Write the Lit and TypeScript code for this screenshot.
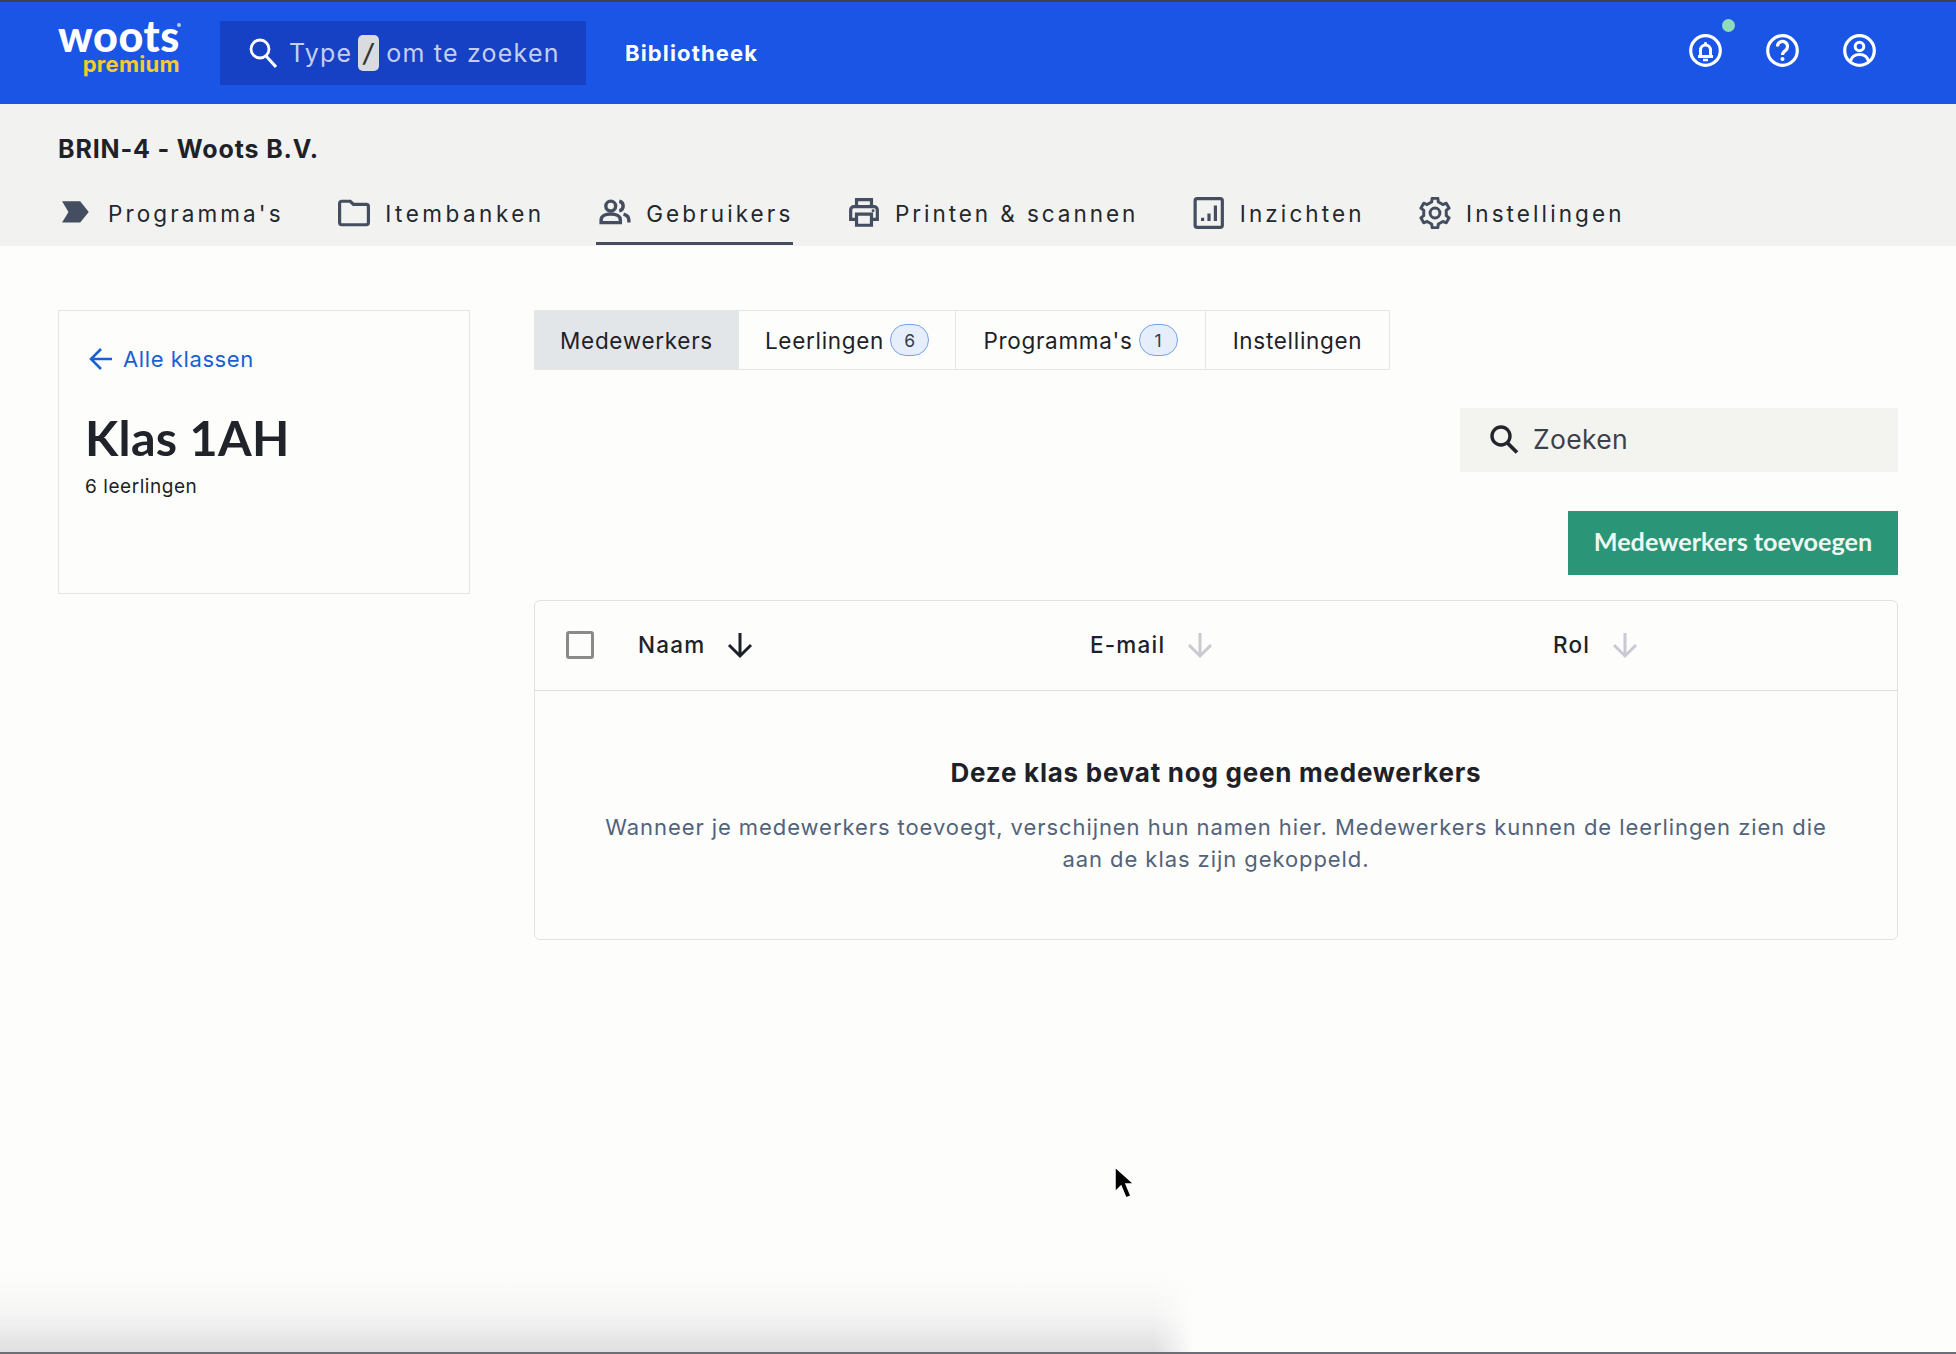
import { LitElement, html, css, svg } from "lit";
import { customElement } from "lit/decorators.js";

const gearPath = () => {
  const pts: string[] = [];
  for (let i = 0; i < 6; i++) {
    const a = -90 + i * 60;
    const p = (deg: number, r: number) => {
      const t = (deg * Math.PI) / 180;
      return `${(15 + r * Math.cos(t)).toFixed(2)} ${(15 + r * Math.sin(t)).toFixed(2)}`;
    };
    pts.push(p(a - 30, 10.6), p(a - 17, 10.8), p(a - 11, 14), p(a + 11, 14), p(a + 17, 10.8));
  }
  return "M" + pts.join("L") + "Z";
};

const ink = "#444e60";
const tabs = [
  { label: "Programma's", icon: svg`<path d="M1 4h17l8 10-8 10H1l6-10z" fill="${ink}"/>` },
  { label: "Itembanken", icon: svg`<path d="M1.500 6a2 2 0 0 1 2-2h8l3 3h12a2 2 0 0 1 2 2v15a2 2 0 0 1-2 2h-23a2 2 0 0 1-2-2z" fill="none" stroke="${ink}" stroke-width="3"/>` },
  { label: "Gebruikers", active: true, icon: svg`<circle cx="11" cy="8.500" r="4.600" fill="none" stroke="${ink}" stroke-width="3.200"/><path d="M2 24v-2.500c0-3.600 4-5.500 9-5.500s9 1.900 9 5.500V24z" fill="none" stroke="${ink}" stroke-width="3.200"/><path d="M19 4a4.600 4.600 0 0 1 0 9M23 16c3 .9 5 2.700 5 5.500V24" fill="none" stroke="${ink}" stroke-width="3.200"/>` },
  { label: "Printen & scannen", icon: svg`<path d="M8 9V2.500h14V9M8 21H2.500V12a3 3 0 0 1 3-3h19a3 3 0 0 1 3 3v9H22" fill="none" stroke="${ink}" stroke-width="3"/><path d="M8 16h14v10.500H8z" fill="none" stroke="${ink}" stroke-width="3"/><circle cx="23.500" cy="13" r="1.400" fill="${ink}"/>` },
  { label: "Inzichten", icon: svg`<rect x="2" y="1.500" width="25.500" height="27" rx="2" fill="none" stroke="${ink}" stroke-width="3"/><path d="M9 22.500v-3M15 22.500v-7M21 22.500V8" fill="none" stroke="${ink}" stroke-width="3"/>` },
  { label: "Instellingen", icon: svg`<path d="${gearPath()}" fill="none" stroke="${ink}" stroke-width="2.800" stroke-linejoin="round"/><circle cx="15" cy="15" r="4.600" fill="none" stroke="${ink}" stroke-width="2.800"/>` },
];

const arrow = (muted = false) => html`<svg class="sort" viewBox="0 0 28 28" aria-hidden="true"><path d="M14 2v23M3 14l11 11 11-11" fill="none" stroke="${muted ? "#c9c9d3" : "#1d2127"}" stroke-width="3"/></svg>`;

@customElement("app-root")
export class AppRoot extends LitElement {
  static styles = css`
    :host { display: block; position: relative; width: 1956px; height: 1354px; overflow: hidden; background: #fdfdfc; font-family: Inter, "Liberation Sans", sans-serif; color: #1e2228; }
    * { box-sizing: border-box; }
    .top { height: 104px; background: #1a55e6; border-top: 2px solid #3d4150; display: flex; align-items: center; padding: 0 58px; }
    .logo { width: 122px; height: 62px; margin-top: -6px; display: flex; flex-direction: column; align-items: flex-end; position: relative; color: #fff; }
    .logo b { font: 900 43px/34px Lato, sans-serif; letter-spacing: .6px; }
    .logo span { font: 700 22px/22px Inter, sans-serif; letter-spacing: .3px; color: #f4ca35; }
    .logo i { position: absolute; right: -1px; top: 4px; width: 4px; height: 4px; border-radius: 50%; background: #b9cbf5; }
    .find { width: 366px; height: 64px; margin: 0 0 0 40px; background: #1741c4; display: flex; align-items: center; padding-left: 29px; color: #c4cff0; font-size: 25px; letter-spacing: 1.200px; }
    .find svg { width: 28px; height: 30px; margin-right: 12px; flex: none; }
    kbd { width: 21px; height: 36px; border-radius: 5px; background: #d9dbde; color: #333; font: italic 500 25px/36px Inter, sans-serif; text-align: center; margin: 0 7px 0 6px; }
    .lib { color: #fff; font-weight: 700; font-size: 22px; margin-left: 39px; letter-spacing: 1.150px; }
    .actions { margin: -5px 22px 0 auto; display: flex; gap: 44px; position: relative; }
    .actions svg { width: 33px; height: 33px; display: block; }
    .dot { position: absolute; left: 33px; top: -15px; width: 13px; height: 13px; border-radius: 50%; background: #8fdcbd; }
    .org { height: 142px; background: #f2f3f1; padding: 0 58px; }
    h2 { margin: 0; padding-top: 30px; font-size: 25px; line-height: 30px; font-weight: 700; letter-spacing: .85px; }
    .nav { display: flex; margin-top: 27px; height: 54px; }
    .nav a { display: flex; align-items: center; gap: 15px; font-size: 22.500px; letter-spacing: 3.100px; color: #23272e; height: 54px; padding: 0 0 7px 3px; margin-right: 51.500px; border-bottom: 3px solid transparent; white-space: nowrap; }
    .nav a:nth-child(2) { letter-spacing: 3.500px; }
    .nav a:nth-child(4) { letter-spacing: 2.950px; }
    .nav a.on { border-bottom-color: #444e60; }
    .nav svg { width: 32px; height: 32px; flex: none; }
    main { display: flex; padding: 64px 58px 0 58px; gap: 64px; }
    .side { width: 412px; height: 284px; flex: none; border: 1px solid #e4e4e2; padding: 33px 26px; }
    .back { display: flex; align-items: center; gap: 10px; color: #1a60d0; font-size: 22px; letter-spacing: .6px; padding-left: 4px; line-height: 30px; }
    .back svg { width: 24px; height: 24px; }
    h1 { margin: 31px 0 0; font: 700 48.500px/64px Lato, sans-serif; letter-spacing: .3px; color: #20242a; }
    .side p { margin: 4px 0 0; font-size: 19px; line-height: 28px; letter-spacing: .55px; }
    .body { width: 1364px; display: flex; flex-direction: column; }
    .tabs { display: flex; height: 60px; width: 856px; border: 1px solid #e6e6e6; font-size: 22.500px; letter-spacing: .7px; }
    .tabs div { display: flex; align-items: center; justify-content: center; gap: 6px; border-left: 1px solid #e6e6e6; }
    .tabs div:first-child { background: #e3e6e8; border-left: 0; }
    .tabs i { font-style: normal; width: 39px; height: 32px; border-radius: 16px; background: #e7eefb; border: 1px solid #77a3ea; display: grid; place-items: center; font-size: 17.500px; letter-spacing: 0; color: #333b49; }
    .search { align-self: flex-end; width: 438px; height: 64px; margin-top: 38px; background: #f3f3f0; display: flex; align-items: center; padding: 0 0 2px 29px; gap: 14px; font-size: 26.500px; letter-spacing: .3px; color: #3c4149; }
    .search svg { width: 30px; height: 30px; }
    .add { align-self: flex-end; width: 330px; height: 64px; margin-top: 39px; padding-bottom: 4px; background: #2a9577; color: #eef8f3; display: grid; place-items: center; font: 700 25.200px Lato, sans-serif; }
    .table { height: 340px; margin-top: 25px; border: 1px solid #e2e2e6; border-radius: 6px; display: flex; flex-direction: column; }
    .head { height: 90px; padding-bottom: 2px; border-bottom: 1px solid #dcdce2; display: grid; grid-template-columns: 103px 452px 463px 1fr; align-items: center; font-size: 22.500px; letter-spacing: 1.200px; font-weight: 500; }
    .box { width: 28px; height: 28px; border: 3px solid #8a8a8a; border-radius: 3px; margin-left: 31px; }
    .col { display: flex; align-items: center; gap: 21px; }
    .sort { width: 28px; height: 28px; flex: none; }
    .empty { text-align: center; padding-top: 65px; }
    .empty h3 { margin: 0; font-size: 26px; line-height: 34px; font-weight: 700; letter-spacing: .75px; }
    .empty p { margin: 21px auto 0; width: 1240px; font-size: 22px; line-height: 32px; color: #52637a; letter-spacing: .93px; }
    .fade { position: absolute; left: 0; right: 0; bottom: 0; height: 80px; background: linear-gradient(to bottom, rgba(214,214,216,0), rgba(214,214,216,.2) 50%, rgba(214,214,216,.8)); -webkit-mask-image: linear-gradient(to right, #000 59%, transparent 61%); mask-image: linear-gradient(to right, #000 59%, transparent 61%); }
    .edge { position: absolute; left: 0; right: 0; bottom: 0; height: 2px; background: #6d6d78; }
    .cursor { position: absolute; left: 1113px; top: 1165px; width: 22px; height: 36px; }
  `;

  render() {
    return html`
      <header class="top">
        <div class="logo"><b>woots</b><span>premium</span><i></i></div>
        <div class="find">
          <svg viewBox="0 0 28 30"><circle cx="11" cy="11" r="9" fill="none" stroke="#fff" stroke-width="2.800"/><path d="M17 18l10 11" stroke="#fff" stroke-width="3"/></svg>
          <span>Type</span><kbd>/</kbd><span>om te zoeken</span>
        </div>
        <div class="lib">Bibliotheek</div>
        <div class="actions">
          <svg viewBox="0 0 33 33"><circle cx="16.500" cy="16.500" r="14.800" fill="none" stroke="#fff" stroke-width="3.200"/><path d="M9 22.500h15" stroke="#fff" stroke-width="3"/><path d="M11.500 22v-6a5 5 0 0 1 10 0v6" fill="none" stroke="#fff" stroke-width="3"/><path d="M14 26h5M16.500 8v2.500" stroke="#fff" stroke-width="2.400"/></svg>
          <svg viewBox="0 0 33 33"><circle cx="16.500" cy="16.500" r="14.800" fill="none" stroke="#fff" stroke-width="3.200"/><path d="M11.500 12.500a5 5 0 1 1 7.800 4.100c-1.900 1.300-2.800 2.200-2.800 4.400" fill="none" stroke="#fff" stroke-width="3.200"/><circle cx="16.500" cy="25" r="2" fill="#fff"/></svg>
          <svg viewBox="0 0 33 33"><circle cx="16.500" cy="16.500" r="14.800" fill="none" stroke="#fff" stroke-width="3.200"/><circle cx="16.500" cy="12.500" r="4.300" fill="none" stroke="#fff" stroke-width="3"/><path d="M7.500 27c1.300-4.500 4.500-6.500 9-6.500s7.700 2 9 6.500" fill="none" stroke="#fff" stroke-width="3"/></svg>
          <span class="dot"></span>
        </div>
      </header>
      <section class="org">
        <h2>BRIN-4 - Woots B.V.</h2>
        <nav class="nav">
          ${tabs.map((t) => html`<a class="${t.active ? "on" : ""}"><svg viewBox="0 0 30 30">${t.icon}</svg>${t.label}</a>`)}
        </nav>
      </section>
      <main>
        <aside class="side">
          <div class="back"><svg viewBox="0 0 24 24"><path d="M23 12H3M12 2L2 12l10 10" fill="none" stroke="#1a60d0" stroke-width="2.600"/></svg>Alle klassen</div>
          <h1>Klas 1AH</h1>
          <p>6 leerlingen</p>
        </aside>
        <div class="body">
          <div class="tabs">
            <div style="width:203px">Medewerkers</div>
            <div style="width:217px">Leerlingen <i>6</i></div>
            <div style="width:250px">Programma's <i>1</i></div>
            <div style="flex:1">Instellingen</div>
          </div>
          <div class="search">
            <svg viewBox="0 0 30 30"><circle cx="12" cy="12" r="9" fill="none" stroke="#22262c" stroke-width="3.400"/><path d="M18.500 19l9.500 9.500" stroke="#22262c" stroke-width="3.800"/></svg>
            Zoeken
          </div>
          <div class="add">Medewerkers toevoegen</div>
          <div class="table">
            <div class="head">
              <div class="box"></div>
              <div class="col">Naam ${arrow()}</div>
              <div class="col">E-mail ${arrow(true)}</div>
              <div class="col">Rol ${arrow(true)}</div>
            </div>
            <div class="empty">
              <h3>Deze klas bevat nog geen medewerkers</h3>
              <p>Wanneer je medewerkers toevoegt, verschijnen hun namen hier. Medewerkers kunnen de leerlingen zien die aan de klas zijn gekoppeld.</p>
            </div>
          </div>
        </div>
      </main>
      <div class="fade"></div>
      <div class="edge"></div>
      <svg class="cursor" viewBox="0 0 22 36"><path d="M2 2v25l6-6 5 12 5-2-5-12h8z" fill="#000" stroke="#fff" stroke-width="1.500"/></svg>
    `;
  }
}
